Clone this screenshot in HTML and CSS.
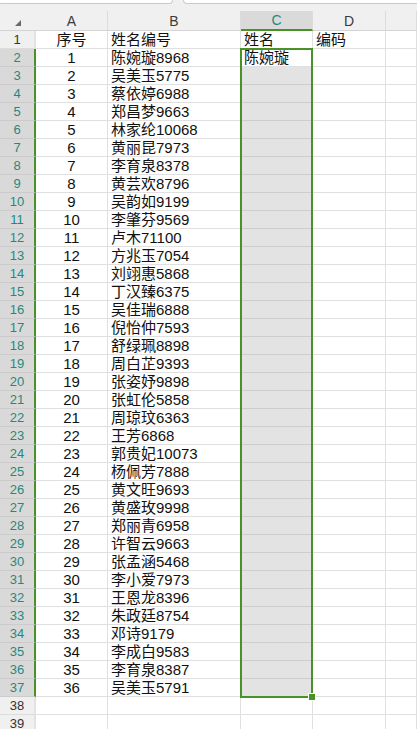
FILE: index.html
```html
<!DOCTYPE html>
<html lang="zh-CN">
<head>
    <meta charset="UTF-8">
    <meta name="viewport" content="width=device-width, initial-scale=1.0">
    <title>姓名编号</title>
    <link rel="stylesheet" href="styles.css">
</head>
<body>
    <div class="topbar">
        <div class="tab tab-left"></div>
        <div class="tab tab-right"></div>
    </div>
    <div class="sheet">
        <table class="grid">
            <thead>
                <tr>
                    <th class="corner w-rh"><span class="corner-mark"></span></th>
                    <th class="w-a">A</th>
                    <th class="w-b">B</th>
                    <th class="w-c col-on">C</th>
                    <th class="w-d">D</th>
                    <th class="w-e"></th>
                </tr>
            </thead>
            <tbody>
                <tr><th class="rh">1</th><td class="num">序号</td><td>姓名编号</td><td>姓名</td><td>编码</td><td></td></tr>
                <tr><th class="rh on">2</th><td class="num">1</td><td>陈婉璇8968</td><td class="cur">陈婉璇</td><td></td><td></td></tr>
                <tr><th class="rh on">3</th><td class="num">2</td><td>吴美玉5775</td><td class="sel"></td><td></td><td></td></tr>
                <tr><th class="rh on">4</th><td class="num">3</td><td>蔡依婷6988</td><td class="sel"></td><td></td><td></td></tr>
                <tr><th class="rh on">5</th><td class="num">4</td><td>郑昌梦9663</td><td class="sel"></td><td></td><td></td></tr>
                <tr><th class="rh on">6</th><td class="num">5</td><td>林家纶10068</td><td class="sel"></td><td></td><td></td></tr>
                <tr><th class="rh on">7</th><td class="num">6</td><td>黄丽昆7973</td><td class="sel"></td><td></td><td></td></tr>
                <tr><th class="rh on">8</th><td class="num">7</td><td>李育泉8378</td><td class="sel"></td><td></td><td></td></tr>
                <tr><th class="rh on">9</th><td class="num">8</td><td>黄芸欢8796</td><td class="sel"></td><td></td><td></td></tr>
                <tr><th class="rh on">10</th><td class="num">9</td><td>吴韵如9199</td><td class="sel"></td><td></td><td></td></tr>
                <tr><th class="rh on">11</th><td class="num">10</td><td>李肇芬9569</td><td class="sel"></td><td></td><td></td></tr>
                <tr><th class="rh on">12</th><td class="num">11</td><td>卢木71100</td><td class="sel"></td><td></td><td></td></tr>
                <tr><th class="rh on">13</th><td class="num">12</td><td>方兆玉7054</td><td class="sel"></td><td></td><td></td></tr>
                <tr><th class="rh on">14</th><td class="num">13</td><td>刘翊惠5868</td><td class="sel"></td><td></td><td></td></tr>
                <tr><th class="rh on">15</th><td class="num">14</td><td>丁汉臻6375</td><td class="sel"></td><td></td><td></td></tr>
                <tr><th class="rh on">16</th><td class="num">15</td><td>吴佳瑞6888</td><td class="sel"></td><td></td><td></td></tr>
                <tr><th class="rh on">17</th><td class="num">16</td><td>倪怡仲7593</td><td class="sel"></td><td></td><td></td></tr>
                <tr><th class="rh on">18</th><td class="num">17</td><td>舒绿珮8898</td><td class="sel"></td><td></td><td></td></tr>
                <tr><th class="rh on">19</th><td class="num">18</td><td>周白芷9393</td><td class="sel"></td><td></td><td></td></tr>
                <tr><th class="rh on">20</th><td class="num">19</td><td>张姿妤9898</td><td class="sel"></td><td></td><td></td></tr>
                <tr><th class="rh on">21</th><td class="num">20</td><td>张虹伦5858</td><td class="sel"></td><td></td><td></td></tr>
                <tr><th class="rh on">22</th><td class="num">21</td><td>周琼玟6363</td><td class="sel"></td><td></td><td></td></tr>
                <tr><th class="rh on">23</th><td class="num">22</td><td>王芳6868</td><td class="sel"></td><td></td><td></td></tr>
                <tr><th class="rh on">24</th><td class="num">23</td><td>郭贵妃10073</td><td class="sel"></td><td></td><td></td></tr>
                <tr><th class="rh on">25</th><td class="num">24</td><td>杨佩芳7888</td><td class="sel"></td><td></td><td></td></tr>
                <tr><th class="rh on">26</th><td class="num">25</td><td>黄文旺9693</td><td class="sel"></td><td></td><td></td></tr>
                <tr><th class="rh on">27</th><td class="num">26</td><td>黄盛玫9998</td><td class="sel"></td><td></td><td></td></tr>
                <tr><th class="rh on">28</th><td class="num">27</td><td>郑丽青6958</td><td class="sel"></td><td></td><td></td></tr>
                <tr><th class="rh on">29</th><td class="num">28</td><td>许智云9663</td><td class="sel"></td><td></td><td></td></tr>
                <tr><th class="rh on">30</th><td class="num">29</td><td>张孟涵5468</td><td class="sel"></td><td></td><td></td></tr>
                <tr><th class="rh on">31</th><td class="num">30</td><td>李小爱7973</td><td class="sel"></td><td></td><td></td></tr>
                <tr><th class="rh on">32</th><td class="num">31</td><td>王恩龙8396</td><td class="sel"></td><td></td><td></td></tr>
                <tr><th class="rh on">33</th><td class="num">32</td><td>朱政廷8754</td><td class="sel"></td><td></td><td></td></tr>
                <tr><th class="rh on">34</th><td class="num">33</td><td>邓诗9179</td><td class="sel"></td><td></td><td></td></tr>
                <tr><th class="rh on">35</th><td class="num">34</td><td>李成白9583</td><td class="sel"></td><td></td><td></td></tr>
                <tr><th class="rh on">36</th><td class="num">35</td><td>李育泉8387</td><td class="sel"></td><td></td><td></td></tr>
                <tr><th class="rh on">37</th><td class="num">36</td><td>吴美玉5791</td><td class="sel"></td><td></td><td></td></tr>
                <tr><th class="rh">38</th><td class="num"></td><td></td><td></td><td></td><td></td></tr>
                <tr><th class="rh">39</th><td class="num"></td><td></td><td></td><td></td><td></td></tr>
            </tbody>
        </table>
        <!-- 选区边框 C2:C37 -->
        <div class="selection"><span class="fill-handle"></span></div>
    </div>
</body>
</html>
```
FILE: styles.css
```css
*{
    margin:0;
    padding:0;
    box-sizing:border-box;
}
body{
    width:417px;
    height:729px;
    overflow:hidden;
    background:#fff;
    font-family:"Liberation Sans","Noto Sans CJK SC",sans-serif;
}
.topbar{
    display:flex;
    gap:10px;
    height:11px;
    background:#f0f0f0;
}
.tab{
    height:4px;
    background:#fff;
    border:1px solid #c9c9c9;
    border-top:none;
    border-radius:0 0 6px 6px;
}
.tab-left{
    width:175px;
    margin-left:-2px;
}
.tab-right{
    flex:1;
    margin-right:-3px;
}
.sheet{
    position:relative;
}
.grid{
    width:417px;
    table-layout:fixed;
    border-collapse:separate;
    border-spacing:0;
}
.grid thead th{
    height:20px;
    background:#f0f0f0;
    color:#3a3a3a;
    font-size:14px;
    font-weight:normal;
    text-align:center;
    border-right:1px solid #dcdcdc;
    border-bottom:1px solid #d4d4d4;
}
.w-rh{ width:36px; }
.w-a{ width:72px; }
.w-b{ width:133px; }
.w-c{ width:72px; }
.w-d{ width:73px; }
.grid thead th.corner{
    border-right:none;
    vertical-align:middle;
}
.corner-mark{
    display:inline-block;
    width:0;
    height:0;
    margin-top:4px;
    border-left:6px solid transparent;
    border-bottom:6px solid #6a6a6a;
}
.grid thead th.col-on{
    background:#dadada;
    color:#1e8a80;
    border-bottom:2px solid #4a9126;
}
.grid tbody th.rh{
    height:18px;
    background:#f0f0f0;
    color:#333;
    font-size:13px;
    font-weight:normal;
    text-align:center;
    line-height:17px;
    border-right:2px solid #e2e2e2;
    border-bottom:1px solid #dcdcdc;
}
.grid tbody th.rh.on{
    background:#d9d9d9;
    color:#1e8a80;
    border-right-color:#4a9126;
    border-bottom-color:#cbcbcb;
}
.grid td{
    height:18px;
    padding:0 3px;
    font-size:15px;
    line-height:17px;
    color:#111;
    white-space:nowrap;
    overflow:hidden;
    border-right:1px solid #e0e0e0;
    border-bottom:1px solid #e0e0e0;
}
.grid td.num{
    text-align:center;
}
.grid td.sel{
    background:#e3e3e3;
    border-bottom-color:#cdcdcd;
}
.selection{
    position:absolute;
    top:37px;
    left:240px;
    width:73px;
    height:650px;
    border:2px solid #4a9126;
    pointer-events:none;
}
.fill-handle{
    position:absolute;
    right:-5px;
    bottom:-5px;
    width:8px;
    height:8px;
    background:#4a9126;
    border:1px solid #fff;
}
```
